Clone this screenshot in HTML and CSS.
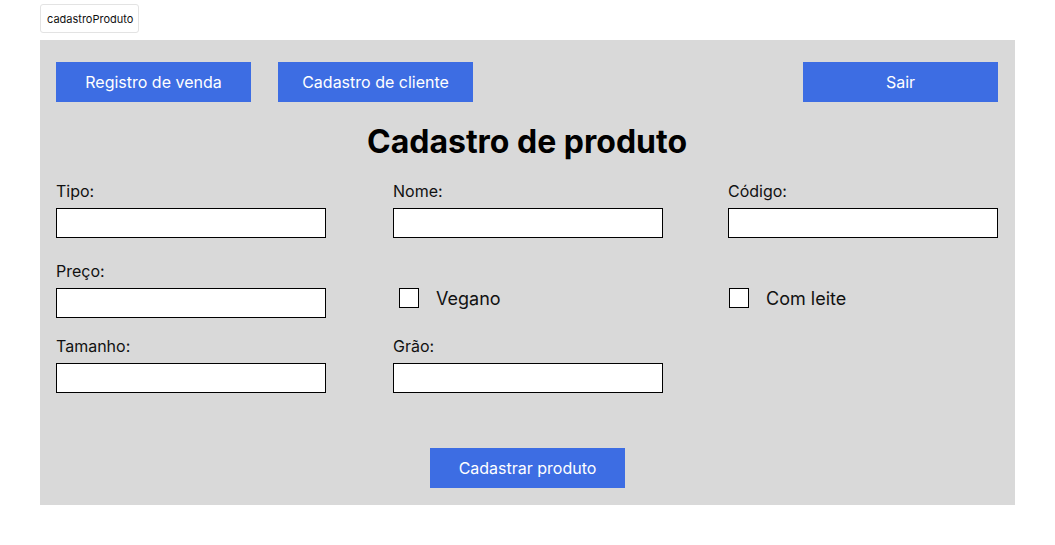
FILE: index.html
```html
<!DOCTYPE html>
<html lang="pt">
<head>
<meta charset="utf-8">
<title>cadastroProduto</title>
<link rel="stylesheet" href="styles.css">
</head>
<body>
<div class="tag">cadastroProduto</div>
<main class="frame">
  <nav class="nav">
    <button class="btn">Registro de venda</button>
    <button class="btn">Cadastro de cliente</button>
    <span class="spacer"></span>
    <button class="btn">Sair</button>
  </nav>
  <h1 class="title">Cadastro de produto</h1>
  <div class="row row1">
    <div class="field"><label class="lbl">Tipo:</label><div class="input"></div></div>
    <div class="field"><label class="lbl">Nome:</label><div class="input"></div></div>
    <div class="field"><label class="lbl">Código:</label><div class="input"></div></div>
  </div>
  <div class="row row2">
    <div class="field"><label class="lbl">Preço:</label><div class="input"></div></div>
    <div class="check check-a"><span class="box"></span><span class="check-text">Vegano</span></div>
    <div class="check check-b"><span class="box"></span><span class="check-text">Com leite</span></div>
  </div>
  <div class="row row3">
    <div class="field"><label class="lbl">Tamanho:</label><div class="input"></div></div>
    <div class="field"><label class="lbl">Grão:</label><div class="input"></div></div>
    <div></div>
  </div>
  <div class="submit-wrap">
    <button class="btn">Cadastrar produto</button>
  </div>
</main>
</body>
</html>
```
FILE: styles.css
```css
* { box-sizing: border-box; }
body {
  margin: 0;
  background: #ffffff;
  font-family: Inter, "Noto Sans", sans-serif;
  color: #000;
}
.tag {
  display: inline-flex;
  align-items: center;
  margin: 4px 0 0 40px;
  height: 29px;
  padding: 0 5px 0 6px;
  border: 1px solid #e3e3e3;
  border-radius: 3px;
  font-size: 11px;
  color: #111;
  background: #fff;
}
.frame {
  margin: 7px 0 0 40px;
  width: 975px;
  height: 465px;
  background: #d9d9d9;
  padding: 22px 17px 0 16px;
}
.nav {
  display: flex;
  gap: 27px;
  height: 40px;
}
.spacer { flex: 1; }
.btn {
  width: 195px;
  height: 40px;
  border: none;
  background: #3d6de3;
  color: #fff;
  font-family: Inter, "Noto Sans", sans-serif;
  font-size: 16px;
  padding: 0;
}
.title {
  margin: 20px 0 0;
  height: 40px;
  line-height: 40px;
  font-size: 32px;
  font-weight: 700;
  text-align: center;
}
.row {
  display: grid;
  grid-template-columns: 337px 335px 270px;
}
.row1 { margin-top: 20px; }
.row2 { margin-top: 24px; }
.row3 { margin-top: 19px; }
.field { display: flex; flex-direction: column; width: 270px; }
.lbl {
  font-size: 16px;
  line-height: 18px;
  height: 18px;
  margin-bottom: 8px;
  color: #111;
}
.input {
  height: 30px;
  border: 1px solid #000;
  background: #fff;
}
.check {
  display: flex;
  align-items: center;
  margin-top: 26px;
  height: 20px;
  gap: 17px;
}
.check-a { margin-left: 6px; }
.check-b { margin-left: 1px; }
.box {
  width: 20px;
  height: 20px;
  border: 1px solid #000;
  background: #fff;
}
.check-text {
  font-size: 18px;
  color: #111;
}
.submit-wrap {
  display: flex;
  justify-content: center;
  margin-top: 55px;
  padding-left: 1px;
}
```
